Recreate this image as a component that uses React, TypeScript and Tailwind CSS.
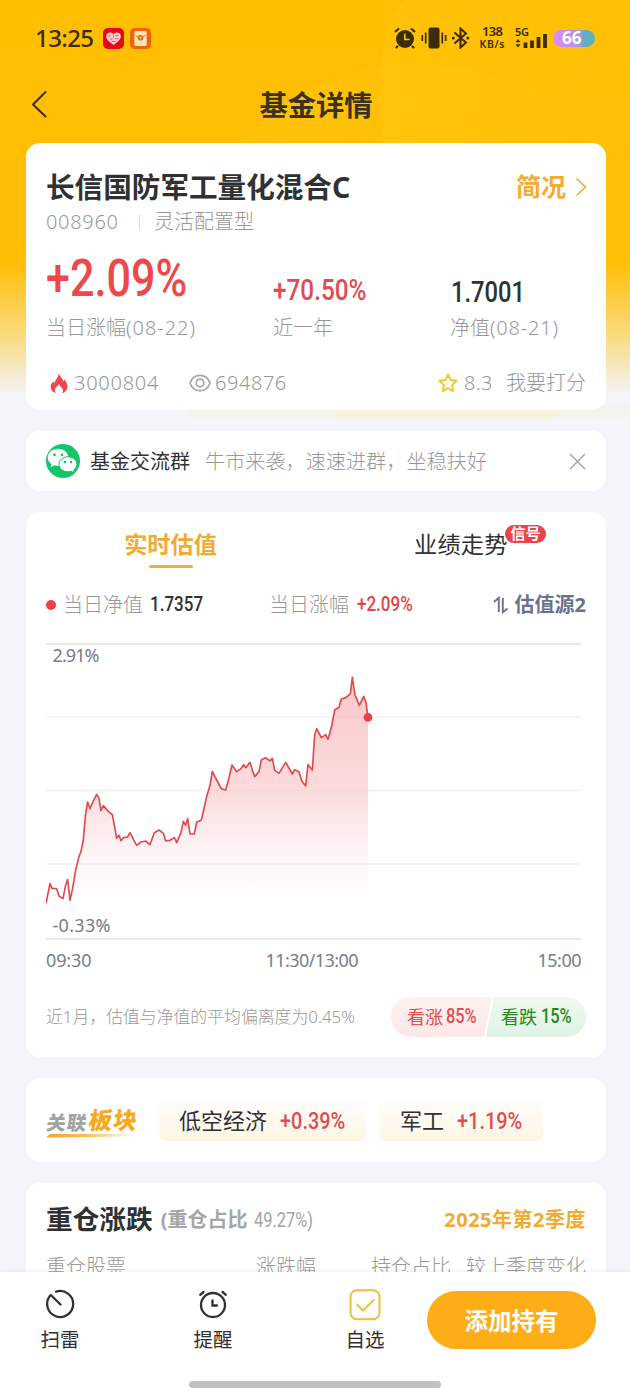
import React from "react";

const POINTS =
  "48,790 60,731 66,745 80,746 87,768 99,776 107,735 113,719 120,781 128,745 137,690 147,650 153,634 160,600 167,520 173,486 180,506 188,487 200,463 207,475 213,512 220,497 235,514 247,524 253,555 260,595 267,586 273,602 280,593 293,591 300,578 313,604 320,616 333,606 347,603 360,614 373,578 387,570 400,580 407,603 420,601 433,593 440,608 453,578 460,544 467,556 473,536 480,582 493,582 500,547 514,540 521,510 530,470 541,432 547,394 560,420 574,446 587,450 594,425 606,375 620,395 633,386 641,374 647,383 660,367 667,390 674,410 687,395 694,360 707,353 720,363 727,355 734,391 747,400 767,367 787,402 794,389 807,395 815,422 827,438 834,374 847,390 854,285 860,266 874,293 887,284 894,298 905,258 914,210 927,202 934,177 947,173 961,162 967,112 975,165 988,196 1001,169 1008,187 1014,232";

type NumProps = { box: string; text: string; children: React.ReactNode };

/** Condensed numerals: a fixed-width box around horizontally narrowed text. */
function Num({ box, text, children }: NumProps) {
  return (
    <span className={`block shrink-0 ${box}`}>
      <span className={`inline-block origin-left whitespace-nowrap font-['Roboto','Noto_Sans_CJK_SC',sans-serif] ${text}`}>
        {children}
      </span>
    </span>
  );
}

function StatusBar() {
  return (
    <div className="flex h-[76px] items-center pl-[35px] pr-[35px] text-[#3a2d05]">
      <span className="w-[59px] whitespace-nowrap text-[24px] font-medium tracking-[-0.6px]">13:25</span>
      <svg className="ml-[9px]" width="21" height="21" viewBox="0 0 21 21">
        <rect width="21" height="21" rx="5" fill="#e60a17" />
        <path d="M10.5 17C7 14.5 3.2 12 3.2 8.3 3.2 4.3 8.300 3.400 10.500 6.200 12.700 3.400 17.800 4.300 17.800 8.300 17.800 12 14 14.500 10.500 17Z" fill="#fbc9cb" />
        <path d="M5.500 8h2M12.500 7.500h3M7 11h2.500M12 10.500h2.500M9 13.500h3.500M10.500 7v2.500" stroke="#e8404a" strokeWidth="0.800" />
      </svg>
      <svg className="ml-[6px]" width="21" height="21" viewBox="0 0 21 21">
        <rect width="21" height="21" rx="4.500" fill="#f26408" />
        <rect x="4.300" y="3" width="12.400" height="15" rx="1.500" fill="#fde6b4" />
        <path d="M4.300 6.500C7 9.500 14 9.500 16.700 6.500" stroke="#ee7a25" fill="none" />
        <circle cx="10.500" cy="9.800" r="2.800" fill="#e4601a" />
        <path d="M9.200 9.200h2.600M10.500 9.200v2.200" stroke="#fde6b4" />
      </svg>
      <div className="ml-auto flex items-center">
        <svg width="22" height="22" viewBox="0 0 22 22">
          <circle cx="11" cy="12" r="9" fill="currentColor" />
          <path d="M1 5 5 1.500M21 5 17 1.500M4 19 1.800 21M18 19l2.200 2" stroke="currentColor" strokeWidth="2.200" />
          <path d="M10.800 6.500V12.500h4.700" stroke="#ffc60d" strokeWidth="1.500" fill="none" />
        </svg>
        <svg className="ml-[5px]" width="26" height="22" viewBox="0 0 26 22">
          <rect x="7.500" y="0.500" width="11" height="21" rx="2" fill="currentColor" />
          <path d="M4.700 5.500v11M1.300 8v6M21.300 5.500v11M24.700 8v6" stroke="currentColor" strokeWidth="1.700" />
        </svg>
        <svg className="ml-[4px]" width="19" height="22" viewBox="0 0 19 22">
          <path d="M3.500 5.500 15 15.500 9.500 20.500V1.500L15 6.500 3.500 16.500" stroke="currentColor" strokeWidth="2" fill="none" />
          <circle cx="2.300" cy="11" r="1.500" fill="currentColor" />
          <circle cx="16.800" cy="11" r="1.500" fill="currentColor" />
        </svg>
        <svg className="ml-[8px]" width="28" height="26" viewBox="0 0 28 26" fontWeight="600" fill="currentColor">
          <text x="4" y="11" fontSize="13" textLength="21">138</text>
          <text x="1.500" y="23" fontSize="10.500" textLength="25">KB/s</text>
        </svg>
        <svg className="ml-[8px]" width="34" height="26" viewBox="0 -1 34 26">
          <text x="1" y="9.500" fontSize="11" fontWeight="600" fill="currentColor" textLength="14">5G</text>
          <path d="M1.500 16.300 4 13l2.500 3.300zM1.500 18.200 4 21.500l2.500-3.300z" fill="currentColor" />
          <path d="M11.500 16.500v5.500M18 14.500v7.500M24.500 11v11M31 8v14" stroke="currentColor" strokeWidth="3.800" />
        </svg>
        <span className="ml-[5px] flex h-[17px] w-[42px] items-center rounded-full bg-[linear-gradient(90deg,#dc8cff_0%,#c48cf0_35%,#a89bdc_66%,#62aebe_72%,#62aebe_100%)] pb-[2px] pl-[9px] text-[17px] font-bold leading-none text-white">
          66
        </span>
      </div>
    </div>
  );
}

function SummaryCard() {
  return (
    <section className="h-[267px] rounded-[14px] bg-white px-5 pt-6">
      <div className="flex h-[40px] items-center justify-between">
        <h2 className="whitespace-nowrap text-[28.600px] font-bold text-[#303133]">长信国防军工量化混合C</h2>
        <div className="flex items-center text-[#f2ab33]">
          <span className="text-[25px] font-bold">简况</span>
          <svg className="-mr-[1px] ml-[9px]" width="12" height="20" viewBox="0 0 12 20" fill="none" stroke="currentColor" strokeWidth="1.600">
            <path d="M1.500 1.500 10.500 10 1.500 18.500" />
          </svg>
        </div>
      </div>
      <div className="flex h-[30px] items-center text-[20px] font-light text-[#989898]">
        <span className="w-[93px] tracking-[0.700px]">008960</span>
        <span className="mr-[14px] h-[15px] w-px bg-[#d8d8d8]" />
        <span>灵活配置型</span>
      </div>
      <div className="flex h-[74px] items-end">
        <Num box="w-[227px] text-[#ee484b]" text="scale-x-[0.845] pb-[4px] text-[51px] font-medium leading-[56px]">+2.09%</Num>
        <Num box="w-[178px] text-[#e04d50]" text="scale-x-[0.825] pb-[3px] text-[29.500px] font-medium leading-[36px]">+70.50%</Num>
        <Num box="w-[80px] text-[#303133]" text="scale-x-[0.79] pb-[1px] text-[30px] font-medium leading-[36px]">1.7001</Num>
      </div>
      <div className="flex h-[34px] items-center whitespace-nowrap text-[20px] font-light text-[#989898]">
        <span className="w-[227px]">当日涨幅<span className="tracking-[0.950px]">(08-22)</span></span>
        <span className="w-[177px]">近一年</span>
        <span>净值<span className="tracking-[0.800px]">(08-21)</span></span>
      </div>
      <div className="mt-[21px] flex h-[34px] items-center whitespace-nowrap text-[20px] font-light text-[#989898]">
        <svg className="ml-[4px]" width="18" height="21" viewBox="0 0 18 21">
          <path d="M8.500 0.500C9.500 3 13 5.500 13.300 8.500 14 8 14.200 7 14.200 6.300 16 8.500 17.500 11 17.500 13.500 17.500 17 15 19.700 12 20.300 13.500 18.500 13.500 16.500 11.500 14.500 10 13 9.500 12 9.300 10.800 8 13 5 14.500 5 17 5 18.500 5.500 19.500 6.500 20.300 3 19.500 0.700 17 0.700 13.800 0.700 11.500 2 9.700 3.300 8.300 3.500 9.200 4 9.800 4.600 10 5.500 6.500 8.500 4.500 8.500 0.500Z" fill="#f0464a" />
        </svg>
        <span className="ml-[6px] w-[114px] tracking-[0.750px]">3000804</span>
        <svg className="ml-px" width="22" height="18" viewBox="0 0 22 18" fill="none" stroke="#a6a6a6" strokeWidth="1.700">
          <path d="M1 9C4.500-1.300 17.500-1.300 21 9 17.500 19.300 4.500 19.300 1 9Z" />
          <circle cx="11" cy="9" r="3.800" />
        </svg>
        <span className="ml-[4px] tracking-[0.550px]">694876</span>
        <svg className="ml-auto mr-[6px]" width="20" height="20" viewBox="0 0 20 20" fill="none" stroke="#f8c62f" strokeWidth="2" strokeLinejoin="round">
          <path d="M10 1.700 12.600 7 18.500 7.800 14.200 12l1 6L10 15.200 4.800 18l1-6L1.500 7.800 7.400 7Z" />
        </svg>
        <span className="w-[42px] tracking-[0.300px]">8.3</span>
        <span>我要打分</span>
      </div>
    </section>
  );
}

function GroupBanner() {
  return (
    <section className="flex h-[60px] items-center rounded-[14px] bg-white px-5 text-[20px]">
      <svg width="34" height="34" viewBox="0 0 34 34">
        <circle cx="17" cy="17" r="17" fill="#13c566" />
        <path d="M12 4.800c-6 0-10.200 3.900-10.200 8.700 0 2.900 1.400 5 3.600 6.600l-.9 3.200 3.900-2c1.100.4 2.300.6 3.600.6 6 0 10.200-3.800 10.200-8.500S18 4.800 12 4.800Z" fill="#fff" />
        <path d="M22 12.800c-5 0-9 3.300-9 7.500s4 7.500 9 7.500c1.200 0 2.200-.2 3.200-.5l3.200 1.700-.8-2.900c2-1.400 3.300-3.400 3.300-5.800 0-4.200-3.900-7.500-8.900-7.500Z" fill="#fff" stroke="#13c566" strokeWidth="1" />
        <circle cx="8.500" cy="10.800" r="1.400" fill="#13c566" />
        <circle cx="16" cy="10.800" r="1.400" fill="#13c566" />
        <circle cx="19" cy="18" r="1.200" fill="#13c566" />
        <circle cx="25" cy="18" r="1.200" fill="#13c566" />
      </svg>
      <span className="ml-[10px] pt-[2px] text-[#303133]">基金交流群</span>
      <span className="ml-[15px] whitespace-nowrap pt-[2px] font-light tracking-[0.150px] text-[#989898]">牛市来袭，速速进群，坐稳扶好</span>
      <svg className="ml-auto" width="17" height="17" viewBox="0 0 17 17" stroke="#a8a8a8" strokeWidth="1.500">
        <path d="M1 1 16 16M16 1 1 16" />
      </svg>
    </section>
  );
}

function Chart() {
  return (
    <svg className="block" width="541" height="336" viewBox="46 640 541 336" fontSize="18" fill="#777b8d">
      <defs>
        <linearGradient id="area" x1="0" y1="0" x2="0" y2="1">
          <stop offset="0" stopColor="#f8babd" stopOpacity="0.800" />
          <stop offset="0.500" stopColor="#f9c4c6" stopOpacity="0.620" />
          <stop offset="1" stopColor="#fde3e4" stopOpacity="0" />
        </linearGradient>
      </defs>
      <path d="M46 717H581M46 790.500H581M46 864H581" stroke="#f1f1f1" strokeWidth="1.500" />
      <path d="M46 644H581M46 939H581" stroke="#dfe1e4" strokeWidth="1.500" />
      <g transform="translate(30 640) scale(0.33333)">
        <polygon points={`${POINTS} 1014,790`} fill="url(#area)" />
        <polyline points={POINTS} fill="none" stroke="#e04b4e" strokeWidth="5" strokeLinejoin="round" />
        <circle cx="1014" cy="232" r="13" fill="#f04045" />
      </g>
      <text x="52.500" y="662" textLength="47">2.91%</text>
      <text x="52.500" y="932" textLength="58">-0.33%</text>
      <text x="46" y="967" textLength="45.500">09:30</text>
      <text x="265.500" y="967" textLength="93">11:30/13:00</text>
      <text x="537.500" y="967" textLength="44">15:00</text>
    </svg>
  );
}

function ValuationCard() {
  return (
    <section className="h-[545px] rounded-[14px] bg-white px-5">
      <div className="flex h-[62px] pt-[13px] text-[23.200px]">
        <div className="flex w-[250px] flex-col items-center font-bold text-[#f2ab2f]">
          <span className="-ml-[1px] leading-[38px]">实时估值</span>
          <span className="mt-[2px] h-[3px] w-[44px] rounded-full bg-[#f0b03c]" />
        </div>
        <div className="relative ml-[118px] text-[#303133]">
          <span className="leading-[38px] tracking-[0.200px]">业绩走势</span>
          <span className="absolute left-[91px] top-0 flex h-[18px] w-[41px] items-center justify-center whitespace-nowrap rounded-full bg-[#e84449] pb-[2px] text-[15px] font-bold leading-none text-white">
            信号
          </span>
        </div>
      </div>
      <div className="flex h-[62px] items-center whitespace-nowrap text-[20px] font-light text-[#989898]">
        <span className="mr-[7px] h-[10px] w-[10px] rounded-full bg-[#f04045]" />
        <span className="w-[87px]">当日净值</span>
        <Num box="w-[119px] text-[#303133]" text="scale-x-[0.81] text-[21px] font-medium">1.7357</Num>
        <span className="w-[88px]">当日涨幅</span>
        <Num box="w-[60px] text-[#e04449]" text="scale-x-[0.81] text-[21px] font-medium">+2.09%</Num>
        <span className="ml-auto flex items-center text-[20px] font-bold text-[#6b7290]">
          <svg className="mr-[6px]" width="16" height="18" viewBox="0 0 16 18" fill="none" stroke="currentColor" strokeWidth="1.900">
            <path d="M1 6 5.800 1.800V16M9.800 2v14.200L14.500 12.500" />
          </svg>
          估值源2
        </span>
      </div>
      <div className="mt-[4px]">
        <Chart />
      </div>
      <div className="mt-[21px] flex h-[40px] items-center whitespace-nowrap">
        <span className="text-[16.850px] font-light text-[#989898]">近1月，估值与净值的平均偏离度为0.45%</span>
        <div className="ml-auto flex w-[195px] text-[18px]">
          <div className="flex h-[40px] w-[101px] items-center rounded-l-full bg-linear-to-b from-[#fff1f1] to-[#fde8e8] pl-4 text-[#e04d50] [clip-path:polygon(0_0,100%_0,92%_100%,0_100%)]">
            <span className="mr-[3px]">看涨</span>
            <Num box="w-[30px]" text="scale-x-[0.78] text-[21px] font-medium">85%</Num>
          </div>
          <div className="ml-[-6px] flex h-[40px] w-[100px] items-center rounded-r-full bg-linear-to-b from-[#f0f8f1] to-[#e2f2e5] pl-[15px] text-[#1f8a16] [clip-path:polygon(8%_0,100%_0,100%_100%,0_100%)]">
            <span className="mr-[4px]">看跌</span>
            <Num box="w-[30px]" text="scale-x-[0.78] text-[21px] font-medium">15%</Num>
          </div>
        </div>
      </div>
    </section>
  );
}

function SectorCard() {
  return (
    <section className="flex h-[84px] items-center rounded-[14px] bg-white pl-5 text-[22px] text-[#303133]">
      <div className="mt-[5px] flex h-[31px] w-[113px] flex-col">
        <div className="-ml-[1px] flex h-[27px] origin-bottom-left -skew-x-[8deg] items-end whitespace-nowrap pt-[2px] font-black leading-[27px]">
          <span className="w-[42px] text-[19.500px] leading-[23px] tracking-[1px] text-[#a2a2a2]">关联</span>
          <span className="text-[23.500px] tracking-[1px] text-[#fba91c]">板块</span>
        </div>
        <svg width="92" height="4" viewBox="0 0 92 4">
          <defs>
            <linearGradient id="underline">
              <stop offset="0" stopColor="#f5a52a" />
              <stop offset="0.450" stopColor="#f9bd57" />
              <stop offset="1" stopColor="#fff" />
            </linearGradient>
          </defs>
          <path d="M0 3.500 4 0H88L86 2.500Z" fill="url(#underline)" />
        </svg>
      </div>
      <div className="flex h-[42px] w-[207px] items-center rounded-md bg-linear-to-b from-[#fffefc] to-[#fef5e4] pl-5">
        <span className="w-[101px]">低空经济</span>
        <Num box="w-[66px] text-[#e04d50]" text="scale-x-[0.83] pt-[1px] text-[24px] font-medium">+0.39%</Num>
      </div>
      <div className="ml-[13px] flex h-[42px] w-[164px] items-center rounded-md bg-linear-to-b from-[#fffefc] to-[#fef5e4] pl-[21px]">
        <span className="w-[57px]">军工</span>
        <Num box="w-[66px] text-[#e04d50]" text="scale-x-[0.83] pt-[1px] text-[24px] font-medium">+1.19%</Num>
      </div>
    </section>
  );
}

function HoldingsCard() {
  return (
    <section className="h-[180px] rounded-[14px] bg-white px-5 pt-4">
      <div className="flex h-[40px] items-center whitespace-nowrap font-bold">
        <h3 className="text-[26.700px] text-[#303133]">重仓涨跌</h3>
        <span className="ml-[8px] pt-[2px] text-[20px] text-[#a6a6a6]">(重仓占比</span>
        <Num box="ml-[6px] w-[61px] text-[#a3a3a3]" text="scale-x-[0.82] pt-[2px] text-[20px] font-normal">49.27%)</Num>
        <span className="ml-auto pt-[2px] text-[20px] tracking-[0.500px] text-[#f2ab2f]">2025年第2季度</span>
      </div>
      <div className="mt-[12px] flex h-[32px] items-center whitespace-nowrap text-[20px] font-light text-[#989898]">
        <span className="w-[210px]">重仓股票</span>
        <span className="w-[115px]">涨跌幅</span>
        <span className="w-[95px]">持仓占比</span>
        <span>较上季度变化</span>
      </div>
    </section>
  );
}

function BottomBar() {
  return (
    <footer className="relative h-[128px] shrink-0 bg-white shadow-[0_-1px_4px_rgba(0,0,0,0.06)]">
      <div className="flex pt-[17px] text-[19.500px] text-[#303133]">
        <div className="ml-[30px] flex w-[60px] flex-col items-center">
          <svg width="30" height="30" viewBox="0 0 30 30" fill="none" stroke="#303133" strokeWidth="2.300" strokeLinecap="round">
            <path d="M11 2.700A13 13 0 1 1 5.800 6L15.500 15.500" strokeLinejoin="round" />
          </svg>
          <span className="mt-[6px] leading-[30px]">扫雷</span>
        </div>
        <div className="ml-[93px] flex w-[60px] flex-col items-center">
          <svg width="30" height="30" viewBox="0 0 30 30" fill="none" stroke="#303133" strokeWidth="2.300" strokeLinecap="round">
            <circle cx="15" cy="16" r="12" />
            <path d="M2.200 5.800 5.500 3M27.800 5.800 24.500 3M14.500 11.500v5h4.500" />
          </svg>
          <span className="mt-[6px] leading-[30px]">提醒</span>
        </div>
        <div className="ml-[92px] flex w-[60px] flex-col items-center">
          <svg width="32" height="32" viewBox="0 0 32 32" fill="none" stroke="#f5bb3a" strokeWidth="2" strokeLinecap="round" strokeLinejoin="round">
            <rect x="1.500" y="1.200" width="29" height="29" rx="6.500" />
            <path d="M8 15.500 14 21.500 24.500 11" />
          </svg>
          <span className="mt-[4px] leading-[30px]">自选</span>
        </div>
        <button className="ml-[32px] mt-[2px] h-[58px] w-[169px] rounded-full bg-[#fdae17] pt-[3px] text-[23.500px] font-bold text-white">添加持有</button>
      </div>
      <div className="absolute left-[189px] top-[109px] h-[7px] w-[252px] rounded-full bg-[#c1c1c1]" />
    </footer>
  );
}

export default function App() {
  return (
    <div className="relative flex h-[1400px] w-[630px] flex-col overflow-hidden bg-[#f4f5fa] font-['Noto_Sans','Noto_Sans_CJK_SC',sans-serif]">
      <svg className="absolute left-0 top-0" width="630" height="430" viewBox="0 0 630 430">
        <defs>
          <linearGradient id="sky" x1="0" y1="0" x2="0" y2="1">
            <stop offset="0" stopColor="#ffbe00" />
            <stop offset="0.610" stopColor="#ffbe05" />
            <stop offset="0.790" stopColor="#f9dc86" />
            <stop offset="0.920" stopColor="#f4f5fa" />
            <stop offset="1" stopColor="#f4f5fa" />
          </linearGradient>
          <linearGradient id="glow" x1="0" y1="0" x2="1" y2="0.300">
            <stop offset="0" stopColor="#ffd21f" stopOpacity="0.600" />
            <stop offset="1" stopColor="#ffc814" stopOpacity="0.300" />
          </linearGradient>
        </defs>
        <rect width="630" height="430" fill="url(#sky)" />
        <path d="M404 0C380 35 375 65 383 143H630V0Z" fill="url(#glow)" opacity="0.450" />
        <path d="M240 143C285 90 350 60 430 65S590 110 630 150V280H240Z" fill="url(#glow)" opacity="0.400" />
        <path d="M183 405H630V418H190Z" fill="#f3f4ee" />
        <path d="M330 405H575L550 420H335Z" fill="#f5f4df" />
      </svg>
      <main className="relative min-h-0 flex-1 overflow-hidden">
        <StatusBar />
        <header className="flex h-[67px] items-start px-[31px] text-[#38310f]">
          <svg className="mt-[14px]" width="16" height="28" viewBox="0 0 16 28" fill="none" stroke="currentColor" strokeWidth="2" strokeLinecap="round" strokeLinejoin="round">
            <path d="M14.500 2 2 14.500 14.500 26.500" />
          </svg>
          <h1 className="flex-1 pr-[14px] pt-[1px] text-center text-[28.300px] font-bold leading-[57px] text-[#393220]">基金详情</h1>
        </header>
        <div className="flex flex-col gap-[21px] pl-[26px] pr-6">
          <SummaryCard />
          <GroupBanner />
          <ValuationCard />
          <SectorCard />
          <HoldingsCard />
        </div>
      </main>
      <BottomBar />
    </div>
  );
}
